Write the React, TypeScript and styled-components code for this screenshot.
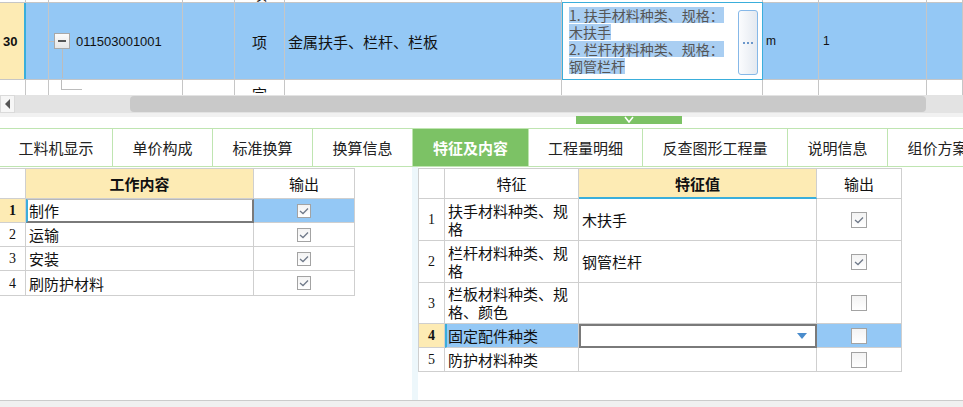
import React from 'react'
import styled, {createGlobalStyle} from 'styled-components'

const colors = {
  line: '#c6c6c6',
  tableLine: '#cfcfcf',
  selected: '#94c8f5',
  yellow: '#fdebb4',
  green: '#7cc265',
  greenLine: '#bfe5b1',
  cyan: '#3aaedb',
  text: '#111',
  edit: '#7a7a7a',
}

const GlobalStyle = createGlobalStyle`
  html, body {
    margin: 0;
    padding: 0;
    background: #fff;
  }
  body {
    width: 963px;
    height: 407px;
    overflow: hidden;
    font-family: "Noto Sans CJK SC", sans-serif;
    color: ${colors.text};
  }
  * {
    box-sizing: border-box;
  }
`

const Page = styled.div`
  display: flex;
  flex-direction: column;
  width: 963px;
  height: 407px;
`

/* ---------- top list grid ---------- */

const TopGrid = styled.div`
  height: 95px;
  flex: none;
  overflow: hidden;
  display: flex;
  flex-direction: column;
`

const TopRow = styled.div<{$h: number; $selected?: boolean}>`
  display: grid;
  grid-template-columns: 26px 23px 134px 52px 50px 277px 201px 56px 108px 36px;
  height: ${p => p.$h}px;
  flex: none;
  background: ${p => (p.$selected ? colors.selected : '#fff')};
  border-bottom: 1px solid ${colors.line};
`

const TopCell = styled.div<{$center?: boolean; $top?: boolean; $bottom?: boolean}>`
  display: flex;
  align-items: ${p => (p.$top ? 'flex-start' : p.$bottom ? 'flex-end' : 'center')};
  justify-content: ${p => (p.$center ? 'center' : 'flex-start')};
  border-right: 1px solid ${colors.line};
  padding: 0 3px;
  font-size: 15px;
  line-height: 17px;
  overflow: hidden;
  white-space: nowrap;
`

const RowNo = styled(TopCell)`
  background: ${colors.yellow};
  border-right: 2px solid ${colors.cyan};
  font-family: "Liberation Sans", Arial, sans-serif;
  font-weight: 700;
  font-size: 13px;
  padding: 0 0 0 3px;
`

const CodeCell = styled(TopCell)`
  padding-left: 5px;
  overflow: visible;
`

const TreeBox = styled.span`
  position: relative;
  width: 16px;
  height: 16px;
  flex: none;
  border: 1px solid #a8a8a8;
  background: linear-gradient(#fbfbfb, #e6e6e6);
  display: flex;
  align-items: center;
  justify-content: center;

  &::before {
    content: '';
    position: absolute;
    left: -6px;
    top: 7px;
    width: 5px;
    border-top: 1px solid #bcbcbc;
  }

  &::after {
    content: '';
    position: absolute;
    left: 7px;
    top: 15px;
    height: 29px;
    border-left: 1px solid #bcbcbc;
  }
`

const Minus = styled.span`
  width: 8px;
  border-top: 2px solid #555;
`

const CodeText = styled.span`
  margin-left: 6px;
  font-family: "Liberation Sans", Arial, sans-serif;
  font-size: 13px;
`

const TreeTail = styled.span`
  margin-left: 8px;
  width: 21px;
  height: 10px;
  border-left: 1px solid #bcbcbc;
  border-bottom: 1px solid #bcbcbc;
`

const SmallText = styled(TopCell)`
  font-family: "Liberation Sans", Arial, sans-serif;
  font-size: 12px;
`

const DescCell = styled.div`
  display: flex;
  background: #fff;
  border: 1px solid ${colors.cyan};
  margin-top: -1px;
  margin-bottom: -1px;
  padding: 4px 4px 3px 6px;
`

const DescText = styled.div`
  flex: 1;
  display: flex;
  flex-direction: column;
  gap: 1px;
  font-size: 14px;
  color: #555;
  white-space: nowrap;
`

const Highlight = styled.span`
  display: inline-block;
  align-self: flex-start;
  line-height: 16px;
  height: 16px;
  background: #a9cef2;
`

const DotsButton = styled.div`
  width: 20px;
  margin: 3px 0 1px;
  border: 1px solid #86b8e8;
  border-radius: 3px;
  background: linear-gradient(90deg, #fbfcfe, #e4e9f0);
  display: flex;
  align-items: center;
  justify-content: center;
`

/* ---------- scroll bar and splitter ---------- */

const HScroll = styled.div`
  height: 18px;
  flex: none;
  display: flex;
  background: #e3e3e3;
`

const ScrollArrow = styled.div`
  width: 15px;
  background: #f6f6f6;
  border: 1px solid #dadada;
  display: flex;
  align-items: center;
  justify-content: center;

  &::before {
    content: '';
    border-right: 5px solid #555;
    border-top: 5px solid transparent;
    border-bottom: 5px solid transparent;
  }
`

const ScrollTrack = styled.div`
  flex: 1;
  display: flex;
  padding: 1px 37px 1px 115px;
`

const ScrollThumb = styled.div`
  flex: 1;
  background: #c9c9c9;
  border-radius: 4px;
`

const Splitter = styled.div`
  height: 15px;
  flex: none;
  background: linear-gradient(#f1f1f1 0 4px, #fff 4px);
  padding: 3px 0 0 576px;
`

const SplitHandle = styled.div`
  width: 106px;
  height: 8px;
  background: ${colors.green};
  display: flex;
  justify-content: center;
`

/* ---------- tabs ---------- */

const TabBar = styled.div`
  height: 39px;
  flex: none;
  display: flex;
  border-top: 1px solid ${colors.greenLine};
  border-bottom: 1px solid ${colors.greenLine};
  overflow: hidden;
`

const Tab = styled.div<{$w: number; $active?: boolean}>`
  width: ${p => p.$w}px;
  flex: none;
  display: flex;
  align-items: center;
  justify-content: center;
  border-right: 1px solid ${colors.greenLine};
  background: ${p => (p.$active ? colors.green : '#fff')};
  color: ${p => (p.$active ? '#fff' : '#222')};
  font-weight: ${p => (p.$active ? 700 : 400)};
  font-size: 15px;
  white-space: nowrap;
  overflow: hidden;
`

/* ---------- lower panels ---------- */

const Panels = styled.div`
  height: 233px;
  flex: none;
  display: flex;
`

const LeftPanel = styled.div`
  width: 412px;
  flex: none;
  padding-top: 1px;
  display: flex;
  align-items: flex-start;
`

const Divider = styled.div`
  width: 6px;
  flex: none;
  background: #edf7fb;
`

const RightPanel = styled.div`
  flex: 1;
  padding-top: 1px;
  display: flex;
  align-items: flex-start;
`

const DataTable = styled.div<{$cols: string; $rows: string; $edge?: boolean}>`
  display: grid;
  grid-template-columns: ${p => p.$cols};
  grid-template-rows: ${p => p.$rows};
  border-top: 1px solid ${colors.tableLine};
  border-left: ${p => (p.$edge ? `1px solid ${colors.tableLine}` : 'none')};
  font-size: 15px;
`

const Cell = styled.div<{$bg?: string; $bold?: boolean; $center?: boolean}>`
  display: flex;
  align-items: center;
  justify-content: ${p => (p.$center ? 'center' : 'flex-start')};
  padding: 0 3px;
  background: ${p => p.$bg || '#fff'};
  border-right: 1px solid ${colors.tableLine};
  border-bottom: 1px solid ${colors.tableLine};
  font-weight: ${p => (p.$bold ? 700 : 400)};
  line-height: 17px;
  overflow: hidden;
`

const NumCell = styled(Cell)`
  justify-content: center;
  font-family: "Liberation Serif", "Times New Roman", serif;
  font-size: 14px;
`

const HeadCell = styled(Cell)<{$mark?: boolean}>`
  justify-content: center;
  border-bottom: ${p => (p.$mark ? `2px solid ${colors.cyan}` : `1px solid ${colors.tableLine}`)};
`

const EditCell = styled(Cell)`
  border-top: 1px solid #b8b8b8;
  border-left: 2px solid ${colors.cyan};
  border-right: 2px solid ${colors.edit};
  border-bottom: 2px solid ${colors.edit};
  padding-left: 1px;
`

const MarkedCell = styled(Cell)`
  border-left: 2px solid ${colors.cyan};
  padding-left: 1px;
`

const ComboCell = styled(Cell)`
  border: 2px solid ${colors.edit};
  justify-content: flex-end;
  padding-right: 8px;

  &::after {
    content: '';
    border-top: 6px solid #4a8ccc;
    border-left: 5px solid transparent;
    border-right: 5px solid transparent;
  }
`

const WrapText = styled.span`
  white-space: normal;
  line-height: 18px;
`

const Box = styled.span<{$size: number}>`
  width: ${p => p.$size}px;
  height: ${p => p.$size}px;
  border: 1px solid #a3a3a3;
  background: linear-gradient(#f3f3f3, #fff);
  display: flex;
  align-items: center;
  justify-content: center;
`

const BottomBar = styled.div`
  flex: 1;
  border-top: 1px solid #cbcbcb;
  background: #f0f0f0;
`

const CheckBox: React.FC<{checked?: boolean; size?: number}> = ({checked, size = 14}) => (
  <Box $size={size}>
    {checked && (
      <svg width="10" height="8" viewBox="0 0 10 8">
        <polyline points="1,4 4,6.5 9,1.5" fill="none" stroke="#707a8a" strokeWidth="1.3" />
      </svg>
    )}
  </Box>
)

const tabs = [
  {label: '工料机显示', w: 113},
  {label: '单价构成', w: 100},
  {label: '标准换算', w: 100},
  {label: '换算信息', w: 100},
  {label: '特征及内容', w: 116, active: true},
  {label: '工程量明细', w: 114},
  {label: '反查图形工程量', w: 145},
  {label: '说明信息', w: 100},
  {label: '组价方案', w: 100},
]

const works = ['制作', '运输', '安装', '刷防护材料']

const features = [
  {name: '扶手材料种类、规格', value: '木扶手', checked: true},
  {name: '栏杆材料种类、规格', value: '钢管栏杆', checked: true},
  {name: '栏板材料种类、规格、颜色', value: '', checked: false},
  {name: '固定配件种类', value: '', checked: false},
  {name: '防护材料种类', value: '', checked: false},
]

const descLines = ['1. 扶手材料种类、规格：', '木扶手 ', '2. 栏杆材料种类、规格：', '钢管栏杆']

const App: React.FunctionComponent = () => {
  return (
    <Page>
      <GlobalStyle />
      <TopGrid>
        <TopRow $h={3}>
          <TopCell />
          <TopCell />
          <TopCell />
          <TopCell />
          <TopCell $center $bottom>项</TopCell>
          <TopCell />
          <TopCell />
          <TopCell />
          <TopCell />
          <TopCell />
        </TopRow>
        <TopRow $h={77} $selected>
          <RowNo>30</RowNo>
          <TopCell />
          <CodeCell>
            <TreeBox><Minus /></TreeBox>
            <CodeText>011503001001</CodeText>
          </CodeCell>
          <TopCell />
          <TopCell $center>项</TopCell>
          <TopCell>金属扶手、栏杆、栏板</TopCell>
          <DescCell>
            <DescText>
              {descLines.map(line => (
                <Highlight key={line}>{line}</Highlight>
              ))}
            </DescText>
            <DotsButton>
              <svg width="12" height="4" viewBox="0 0 12 4">
                <circle cx="2" cy="2" r="1" fill="#3f78bd" />
                <circle cx="6" cy="2" r="1" fill="#3f78bd" />
                <circle cx="10" cy="2" r="1" fill="#3f78bd" />
              </svg>
            </DotsButton>
          </DescCell>
          <SmallText>m</SmallText>
          <SmallText style={{paddingLeft: 4}}>1</SmallText>
          <TopCell />
        </TopRow>
        <TopRow $h={40}>
          <TopCell />
          <TopCell />
          <TopCell $top style={{paddingLeft: 4}}>
            <TreeTail />
          </TopCell>
          <TopCell />
          <TopCell $center $top style={{paddingTop: 5}}>宗</TopCell>
          <TopCell />
          <TopCell />
          <TopCell />
          <TopCell />
          <TopCell />
        </TopRow>
      </TopGrid>

      <HScroll>
        <ScrollArrow />
        <ScrollTrack>
          <ScrollThumb />
        </ScrollTrack>
      </HScroll>

      <Splitter>
        <SplitHandle>
          <svg width="12" height="8" viewBox="0 0 12 8">
            <polyline points="2,1 6,6 10,1" fill="none" stroke="#fff" strokeWidth="1.6" />
          </svg>
        </SplitHandle>
      </Splitter>

      <TabBar>
        {tabs.map(t => (
          <Tab key={t.label} $w={t.w} $active={t.active}>{t.label}</Tab>
        ))}
      </TabBar>

      <Panels>
        <LeftPanel>
          <DataTable $cols="26px 228px 101px" $rows="30px 24px 24px 24px 25px">
            <NumCell />
            <HeadCell $bg={colors.yellow} $bold>工作内容</HeadCell>
            <HeadCell>输出</HeadCell>
            {works.map((w, i) => (
              <React.Fragment key={w}>
                <NumCell $bg={i === 0 ? colors.yellow : undefined} $bold={i === 0}>{i + 1}</NumCell>
                {i === 0 ? <EditCell>{w}</EditCell> : <Cell>{w}</Cell>}
                <Cell $center $bg={i === 0 ? colors.selected : undefined}>
                  <CheckBox checked />
                </Cell>
              </React.Fragment>
            ))}
          </DataTable>
        </LeftPanel>
        <Divider />
        <RightPanel>
          <DataTable $edge $cols="26px 134px 238px 85px" $rows="30px 42px 42px 41px 24px 24px">
            <NumCell />
            <HeadCell>特征</HeadCell>
            <HeadCell $bg={colors.yellow} $bold $mark>特征值</HeadCell>
            <HeadCell>输出</HeadCell>
            {features.map((f, i) => {
              const current = i === 3
              return (
                <React.Fragment key={f.name}>
                  <NumCell $bg={current ? colors.yellow : undefined} $bold={current}>{i + 1}</NumCell>
                  {current ? (
                    <MarkedCell $bg={colors.selected}>{f.name}</MarkedCell>
                  ) : (
                    <Cell><WrapText>{f.name}</WrapText></Cell>
                  )}
                  {current ? <ComboCell /> : <Cell>{f.value}</Cell>}
                  <Cell $center $bg={current ? colors.selected : undefined}>
                    <CheckBox checked={f.checked} size={16} />
                  </Cell>
                </React.Fragment>
              )
            })}
          </DataTable>
        </RightPanel>
      </Panels>

      <BottomBar />
    </Page>
  )
}

export default App
